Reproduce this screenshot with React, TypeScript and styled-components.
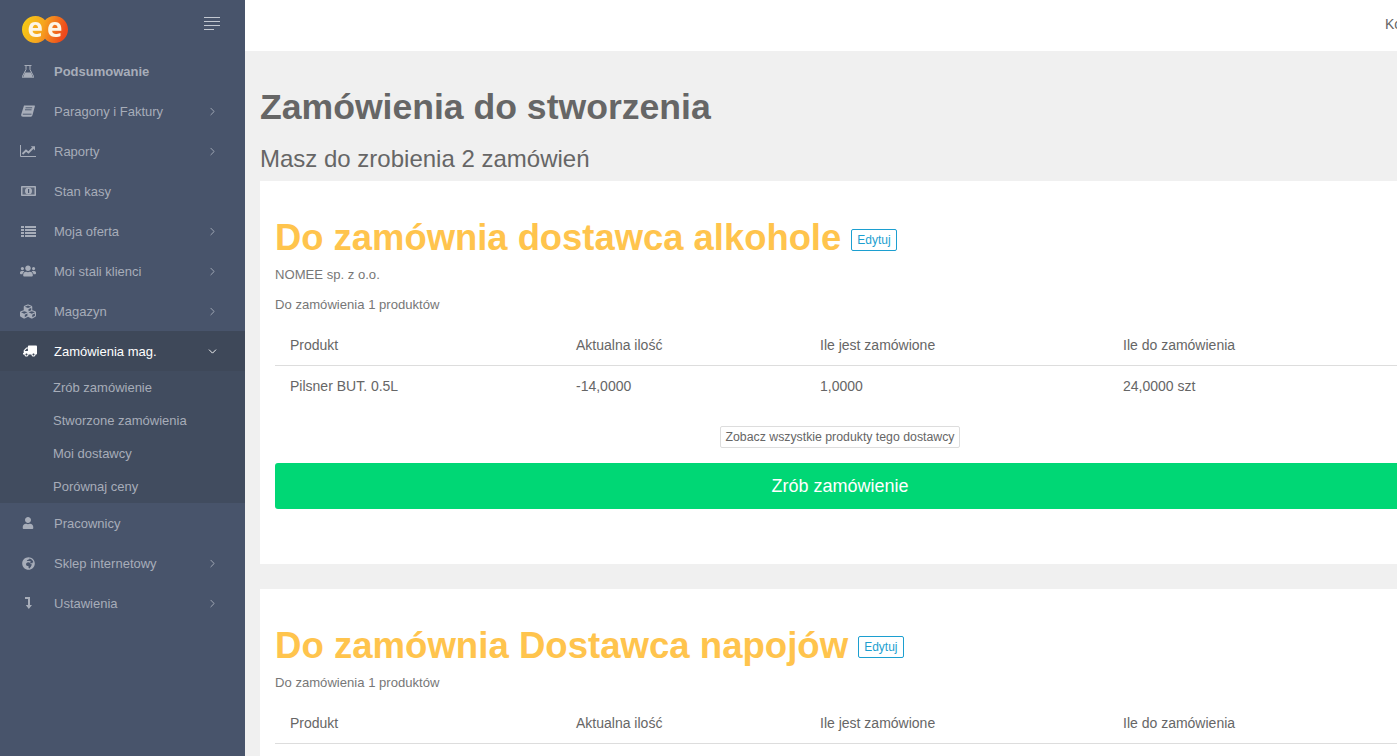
import React from 'react';
import styled, { createGlobalStyle } from 'styled-components';
import { FaCubes, FaGlobeAfrica, FaTruck, FaUser, FaUsers } from 'react-icons/fa';
import { ChevronDown, ChevronRight } from 'lucide-react';

const GlobalStyle = createGlobalStyle`
  html, body {
    margin: 0;
    padding: 0;
    height: 100%;
    overflow: hidden;
    background: #f0f0f0;
    font-family: "Liberation Sans", Arial, sans-serif;
    color: #666;
  }
`;

const Page = styled.div`
  display: flex;
  width: 1397px;
  height: 756px;
  overflow: hidden;
`;

const Sidebar = styled.aside`
  flex: none;
  width: 245px;
  height: 100%;
  background: #48546b;
`;

const Brand = styled.div`
  display: flex;
  justify-content: space-between;
  height: 51px;
  padding: 16px 25px 0 22px;
  box-sizing: border-box;
`;

const Burger = styled.div`
  display: flex;
  flex-direction: column;
  align-items: flex-start;
  gap: 3px;
  width: 16px;
  margin-top: 1px;
`;

const BurgerLine = styled.span<{ $w: number }>`
  display: block;
  height: 1px;
  width: ${(p) => p.$w}px;
  background: #c3c8d1;
`;

const MenuRow = styled.div<{ $open?: boolean }>`
  display: flex;
  align-items: center;
  height: 40px;
  padding-left: 20px;
  padding-right: 26px;
  background: ${(p) => (p.$open ? '#3e4859' : 'transparent')};
  color: ${(p) => (p.$open ? '#fff' : '#a7adb9')};
  font-size: 13px;
`;

const IconSlot = styled.span`
  flex: none;
  display: flex;
  justify-content: center;
  width: 16px;
  margin-right: 18px;
`;

const MenuLabel = styled.span<{ $bold?: boolean }>`
  flex: 1;
  font-weight: ${(p) => (p.$bold ? 700 : 400)};
`;

const SubMenu = styled.div`
  display: flex;
  flex-direction: column;
  background: #414c5f;
`;

const SubItem = styled.div`
  display: flex;
  align-items: center;
  height: 33px;
  padding-left: 53px;
  font-size: 13px;
  color: #a7adb9;
`;

const TruckIcon = styled(FaTruck)`
  transform: translateX(2px) scaleX(-1);
`;

const Main = styled.main`
  flex: none;
  width: 1190px;
`;

const TopBar = styled.header`
  display: flex;
  align-items: center;
  height: 51px;
  padding: 0 0 4px 1140px;
  box-sizing: border-box;
  background: #fff;
  font-size: 14px;
  color: #666;
  white-space: nowrap;
`;

const Content = styled.div`
  padding: 0 15px;
`;

const PageTitle = styled.h1`
  margin: 35px 0 0;
  font-size: 35.6px;
  line-height: 42px;
  font-weight: 700;
  color: #666;
`;

const PageSubtitle = styled.h2`
  margin: 17px 0 8px;
  font-size: 24px;
  line-height: 28px;
  font-weight: 400;
  color: #666;
`;

const Card = styled.section`
  background: #fff;
  padding: 35px 15px 55px;
  margin-bottom: 25px;
`;

const CardHead = styled.div`
  display: flex;
  align-items: center;
  gap: 10px;
  height: 44px;
`;

const CardTitle = styled.h3<{ $size: number }>`
  margin: 0;
  font-size: ${(p) => p.$size}px;
  line-height: 42px;
  font-weight: 700;
  color: #ffc44d;
`;

const EditButton = styled.button`
  height: 22px;
  padding: 0 5px;
  margin-top: 3px;
  background: #fff;
  border: 1px solid #1c9fd0;
  border-radius: 2px;
  color: #1c9fd0;
  font: 12px "Liberation Sans", Arial, sans-serif;
`;

const Note = styled.p`
  margin: 0;
  height: 30px;
  line-height: 30px;
  font-size: 13.1px;
  color: #777;
`;

const Table = styled.table<{ $top: number }>`
  width: 1130px;
  margin-top: ${(p) => p.$top}px;
  border-collapse: collapse;
  table-layout: fixed;
  font-size: 14px;
  color: #666;
`;

const Th = styled.th<{ $w: number }>`
  width: ${(p) => p.$w}px;
  height: 40px;
  padding: 0 15px;
  box-sizing: border-box;
  text-align: left;
  font-weight: 400;
  border-bottom: 1px solid #ddd;
`;

const Td = styled.td`
  height: 41px;
  padding: 0 15px;
`;

const CenterRow = styled.div`
  display: flex;
  justify-content: center;
  margin-top: 19px;
`;

const GhostButton = styled.button`
  height: 22px;
  width: 240px;
  padding: 0;
  background: #fff;
  border: 1px solid #ddd;
  border-radius: 2px;
  color: #666;
  font: 12.3px "Liberation Sans", Arial, sans-serif;
`;

const OrderButton = styled.button`
  display: block;
  width: 1130px;
  height: 46px;
  margin-top: 15px;
  padding: 2px 0 0;
  background: #00d775;
  border: 0;
  border-radius: 3px;
  color: #fff;
  font: 18px "Liberation Sans", Arial, sans-serif;
`;

const LogoSvg = styled.svg`
  margin-top: -8px;
  filter: blur(0.4px);
`;

const Logo = () => (
  <LogoSvg width="46" height="38" viewBox="0 -8 46 38">
    <defs>
      <linearGradient id="eeGrad" x1="0" x2="1" y1="0" y2="0.2">
        <stop offset="0" stopColor="#f5cf14" />
        <stop offset="0.5" stopColor="#f6a51f" />
        <stop offset="1" stopColor="#ee4a1c" />
      </linearGradient>
    </defs>
    <path
      d="M13.500 0C17.500 0 21 1.800 23 4.200C25 1.800 28.500 0 32.500 0C40 0 46 6 46 13.500S40 27 32.500 27C28.500 27 25 25.200 23 22.800C21 25.200 17.500 27 13.500 27C6 27 0 21 0 13.500S6 0 13.500 0Z"
      fill="url(#eeGrad)"
    />
    <text x="5.500" y="21" fontFamily="Open Sans, sans-serif" fontWeight="700" fontSize="26" fill="#fdf6e6">
      e
    </text>
    <text x="25" y="21" fontFamily="Open Sans, sans-serif" fontWeight="700" fontSize="26" fill="#fdf6e6">
      e
    </text>
  </LogoSvg>
);

const FlaskIcon = () => (
  <svg width="12" height="13" viewBox="0 0 12 13" fill="currentColor">
    <rect x="2.500" y="0" width="7" height="1" />
    <path d="M4 .5V4.500L.6 11C0 12.200.5 13 1.800 13H10.200C11.500 13 12 12.200 11.400 11L8 4.500V.5" fill="none" stroke="currentColor" />
    <path d="M3 7.500H9L11 12.500H1Z" />
  </svg>
);

const BookIcon = () => (
  <svg width="14" height="12" viewBox="0 0 14 12" fill="currentColor">
    <path d="M3 .5H13.500C13.900 .5 14 .9 13.900 1.200L11.500 10C11.200 11.200 10.500 11.800 9.500 11.800H2C.6 11.800 0 10.800.2 9.500Z" />
    <path d="M4.500 2.800H11.200M4 4.800H10.600M1.800 9.200H10.500" fill="none" stroke="#48546b" strokeWidth=".9" />
  </svg>
);

const ChartIcon = () => (
  <svg width="16" height="12" viewBox="0 0 16 12" fill="currentColor">
    <path d="M.5 0V11.500H16" fill="none" stroke="currentColor" />
    <path d="M2.500 9L6 5.500L8.500 7.500L13 3" fill="none" stroke="currentColor" strokeWidth="1.800" />
    <path d="M10.800 1.200H15V5.400Z" />
  </svg>
);

const MoneyIcon = () => (
  <svg width="15" height="10" viewBox="0 0 15 10">
    <rect width="15" height="10" rx=".8" fill="currentColor" />
    <rect x="1.500" y="1.500" width="12" height="7" fill="#5a6579" />
    <circle cx="7.500" cy="5" r="3.500" fill="currentColor" />
    <rect x="7" y="3" width="1.200" height="4" fill="#48546b" />
  </svg>
);

const ListIcon = () => (
  <svg width="15" height="11" viewBox="0 0 15 11" fill="currentColor">
    {[0, 3, 6, 9].map((y) => (
      <React.Fragment key={y}>
        <rect y={y} width="3" height="2" />
        <rect x="4" y={y} width="11" height="2" />
      </React.Fragment>
    ))}
  </svg>
);

const LevelDownIcon = () => (
  <svg width="7" height="12" viewBox="0 0 7 12" fill="currentColor">
    <path d="M0 0H5V8H7L3.800 12L.8 8H3V2H0Z" />
  </svg>
);

type MenuItem = { label: string; icon: React.ReactNode; chevron?: boolean; bold?: boolean };

const topItems: MenuItem[] = [
  { label: 'Podsumowanie', icon: <FlaskIcon />, bold: true },
  { label: 'Paragony i Faktury', icon: <BookIcon />, chevron: true },
  { label: 'Raporty', icon: <ChartIcon />, chevron: true },
  { label: 'Stan kasy', icon: <MoneyIcon /> },
  { label: 'Moja oferta', icon: <ListIcon />, chevron: true },
  { label: 'Moi stali klienci', icon: <FaUsers size={16} />, chevron: true },
  { label: 'Magazyn', icon: <FaCubes size={17} />, chevron: true },
];

const bottomItems: MenuItem[] = [
  { label: 'Pracownicy', icon: <FaUser size={12} /> },
  { label: 'Sklep internetowy', icon: <FaGlobeAfrica size={13} />, chevron: true },
  { label: 'Ustawienia', icon: <LevelDownIcon />, chevron: true },
];

const subItems = ['Zrób zamówienie', 'Stworzone zamówienia', 'Moi dostawcy', 'Porównaj ceny'];

const Row = ({ item }: { item: MenuItem }) => (
  <MenuRow>
    <IconSlot>{item.icon}</IconSlot>
    <MenuLabel $bold={item.bold}>{item.label}</MenuLabel>
    {item.chevron && <ChevronRight size={13} strokeWidth={1.7} />}
  </MenuRow>
);

const OrderHead = () => (
  <thead>
    <tr>
      <Th $w={286}>Produkt</Th>
      <Th $w={244}>Aktualna ilość</Th>
      <Th $w={303}>Ile jest zamówione</Th>
      <Th $w={297}>Ile do zamówienia</Th>
    </tr>
  </thead>
);

export default function App() {
  return (
    <Page>
      <GlobalStyle />
      <Sidebar>
        <Brand>
          <Logo />
          <Burger>
            <BurgerLine $w={16} />
            <BurgerLine $w={16} />
            <BurgerLine $w={16} />
            <BurgerLine $w={10} />
          </Burger>
        </Brand>
        {topItems.map((item) => (
          <Row key={item.label} item={item} />
        ))}
        <MenuRow $open>
          <IconSlot>
            <TruckIcon size={14} />
          </IconSlot>
          <MenuLabel>Zamówienia mag.</MenuLabel>
          <ChevronDown size={13} strokeWidth={1.7} />
        </MenuRow>
        <SubMenu>
          {subItems.map((label) => (
            <SubItem key={label}>{label}</SubItem>
          ))}
        </SubMenu>
        {bottomItems.map((item) => (
          <Row key={item.label} item={item} />
        ))}
      </Sidebar>
      <Main>
        <TopBar>Konto</TopBar>
        <Content>
          <PageTitle>Zamówienia do stworzenia</PageTitle>
          <PageSubtitle>Masz do zrobienia 2 zamówień</PageSubtitle>
          <Card>
            <CardHead>
              <CardTitle $size={36.4}>Do zamównia dostawca alkohole</CardTitle>
              <EditButton>Edytuj</EditButton>
            </CardHead>
            <Note>NOMEE sp. z o.o.</Note>
            <Note>Do zamówienia 1 produktów</Note>
            <Table $top={5}>
              <OrderHead />
              <tbody>
                <tr>
                  <Td>Pilsner BUT. 0.5L</Td>
                  <Td>-14,0000</Td>
                  <Td>1,0000</Td>
                  <Td>24,0000 szt</Td>
                </tr>
              </tbody>
            </Table>
            <CenterRow>
              <GhostButton>Zobacz wszystkie produkty tego dostawcy</GhostButton>
            </CenterRow>
            <OrderButton>Zrób zamówienie</OrderButton>
          </Card>
          <Card>
            <CardHead>
              <CardTitle $size={36.6}>Do zamównia Dostawca napojów</CardTitle>
              <EditButton>Edytuj</EditButton>
            </CardHead>
            <Note>Do zamówienia 1 produktów</Note>
            <Table $top={6}>
              <OrderHead />
            </Table>
          </Card>
        </Content>
      </Main>
    </Page>
  );
}
